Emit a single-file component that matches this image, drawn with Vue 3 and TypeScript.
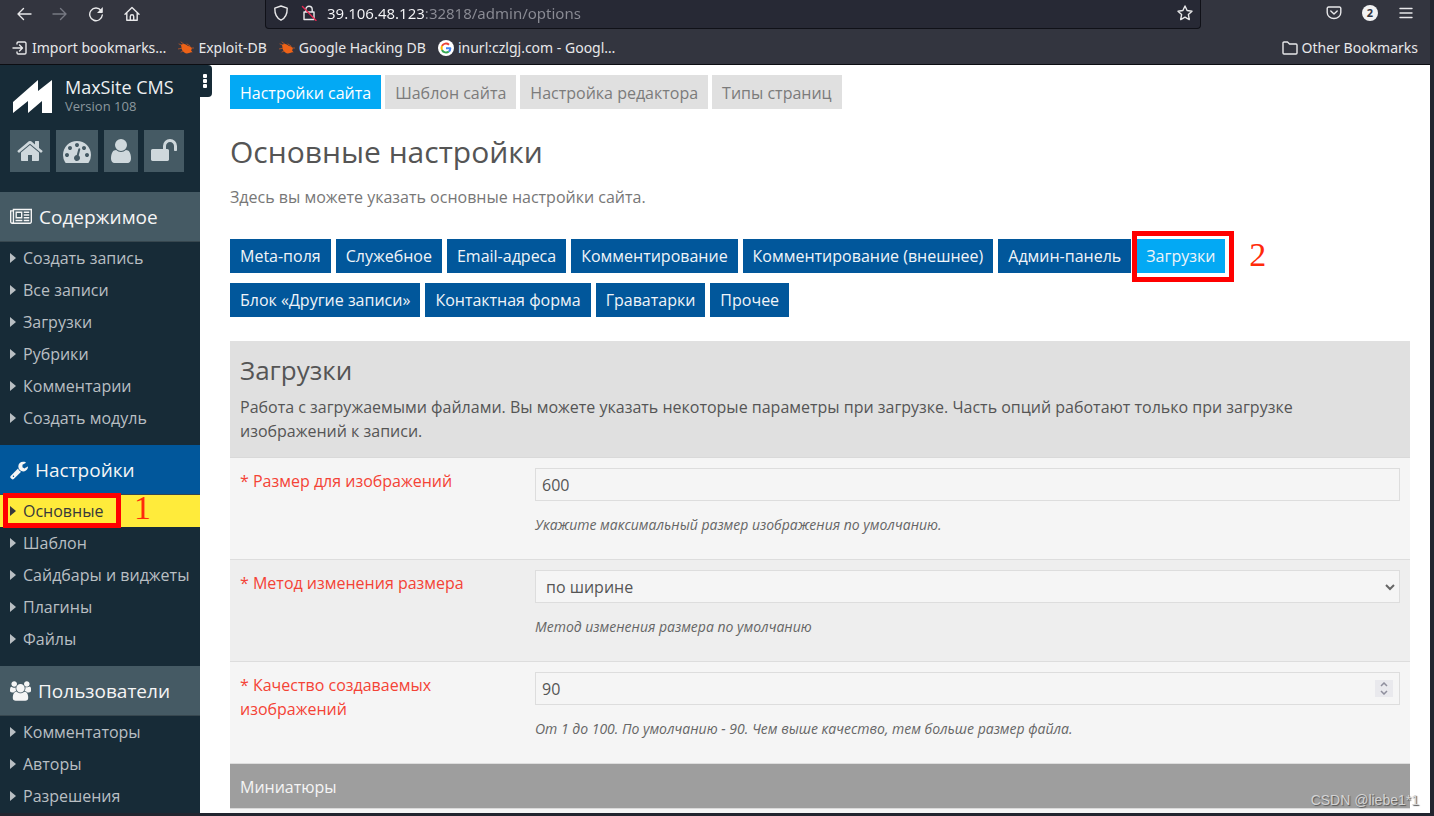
<script setup lang="ts">
import { ref } from 'vue'

interface Tool {
  label: string
  viewBox: string
  width: number
  path: string
}

interface MenuGroup {
  title: string
  current?: boolean
  viewBox: string
  width: number
  path: string
  items: string[]
}

const tools: Tool[] = [
  {
    label: 'Сайт',
    viewBox: '64 0 1664 1792',
    width: 26,
    path: 'M1472 992v480q0 26-19 45t-45 19h-384v-384h-256v384h-384q-26 0-45-19t-19-45v-480q0-1 .5-3t.5-3l575-474 575 474q1 2 1 6zm223-69l-62 74q-8 9-21 11h-3q-13 0-21-7l-692-577-692 577q-12 8-24 7-13-2-21-11l-62-74q-8-10-7-23.5t11-21.5l719-599q32-26 76-26t76 26l244 204v-195q0-14 9-23t23-9h192q14 0 23 9t9 23v408l219 182q10 8 11 21.5t-7 23.5z',
  },
  {
    label: 'Панель',
    viewBox: '0 0 1792 1792',
    width: 28,
    path: 'M384 1152q0-53-37.5-90.5t-90.5-37.5-90.5 37.5-37.5 90.5 37.5 90.5 90.5 37.5 90.5-37.5 37.5-90.5zm192-448q0-53-37.5-90.5t-90.5-37.5-90.5 37.5-37.5 90.5 37.5 90.5 90.5 37.5 90.5-37.5 37.5-90.5zm428 481l101-382q6-26-7.5-48.5t-38.5-29.5-48 6.5-30 39.5l-101 382q-60 5-107 43.5t-63 98.5q-20 77 20 146t117 89 146-20 89-117q16-60-6-117t-72-91zm660-33q0-53-37.5-90.5t-90.5-37.5-90.5 37.5-37.5 90.5 37.5 90.5 90.5 37.5 90.5-37.5 37.5-90.5zm-640-640q0-53-37.5-90.5t-90.5-37.5-90.5 37.5-37.5 90.5 37.5 90.5 90.5 37.5 90.5-37.5 37.5-90.5zm448 192q0-53-37.5-90.5t-90.5-37.5-90.5 37.5-37.5 90.5 37.5 90.5 90.5 37.5 90.5-37.5 37.5-90.5zm320 448q0 261-141 483-19 29-54 29h-1402q-35 0-54-29-141-221-141-483 0-182 71-348t191-286 286-191 348-71 348 71 286 191 191 286 71 348z',
  },
  {
    label: 'Профиль',
    viewBox: '256 0 1280 1792',
    width: 20,
    path: 'M1536 1399q0 109-62.5 187t-150.5 78h-854q-88 0-150.5-78t-62.5-187q0-85 8.5-160.5t31.5-152 58.5-131 94-89 134.5-34.5q131 128 313 128t313-128q76 0 134.5 34.5t94 89 58.5 131 31.5 152 8.5 160.5zm-256-887q0 159-112.5 271.5t-271.5 112.5-271.5-112.5-112.5-271.5 112.5-271.5 271.5-112.5 271.5 112.5 112.5 271.5z',
  },
  {
    label: 'Выход',
    viewBox: '64 0 1664 1792',
    width: 26,
    path: 'M1728 576v256q0 26-19 45t-45 19h-64q-26 0-45-19t-19-45v-256q0-106-75-181t-181-75-181 75-75 181v192h96q40 0 68 28t28 68v576q0 40-28 68t-68 28h-960q-40 0-68-28t-28-68v-576q0-40 28-68t68-28h672v-192q0-185 131.5-316.5t316.5-131.5 316.5 131.5 131.5 316.5z',
  },
]

const menu: MenuGroup[] = [
  {
    title: 'Содержимое',
    viewBox: '0 0 2048 1792',
    width: 22,
    path: 'M1024 512h-384v384h384v-384zm128 640v128h-640v-128h640zm0-768v640h-640v-640h640zm640 768v128h-512v-128h512zm0-256v128h-512v-128h512zm0-256v128h-512v-128h512zm0-256v128h-512v-128h512zm-1536 960v-960h-128v960q0 26 19 45t45 19 45-19 19-45zm1664 0v-1088h-1536v1088q0 33-11 64h1483q26 0 45-19t19-45zm128-1216v1216q0 80-56 136t-136 56h-1664q-80 0-136-56t-56-136v-1088h256v-128h1792z',
    items: ['Создать запись', 'Все записи', 'Загрузки', 'Рубрики', 'Комментарии', 'Создать модуль'],
  },
  {
    title: 'Настройки',
    current: true,
    viewBox: '64 0 1664 1792',
    width: 18,
    path: 'M448 1472q0-26-19-45t-45-19-45 19-19 45 19 45 45 19 45-19 19-45zm644-420l-682 682q-37 37-90 37-52 0-91-37l-106-108q-38-36-38-90 0-53 38-91l681-681q39 98 114.5 173.5t173.5 114.5zm634-435q0 39-23 106-47 134-164.5 217.5t-258.5 83.5q-185 0-316.5-131.5t-131.5-316.5 131.5-316.5 316.5-131.5q58 0 121.5 16.5t107.5 46.5q16 11 16 28t-16 28l-293 169v224l193 107q5-3 79-48.5t135.5-81 70.5-35.5q15 0 23.5 10t8.5 25z',
    items: ['Основные', 'Шаблон', 'Сайдбары и виджеты', 'Плагины', 'Файлы'],
  },
  {
    title: 'Пользователи',
    viewBox: '64 0 1920 1792',
    width: 21,
    path: 'M657 896q-162 5-265 128h-134q-82 0-138-40.5t-56-118.5q0-353 124-353 6 0 43.5 21t97.5 42.5 119 21.5q67 0 133-23-5 37-5 66 0 159 93 293zm1071 637q0 120-73 189.5t-194 69.5h-874q-121 0-194-69.5t-73-189.5q0-53 3.5-103.5t14-109 26.5-108.5 43-97.5 62-81 85.5-53.5 111.5-20q10 0 43 21.5t73 48 107 48 135 21.5 135-21.5 107-48 73-48 43-21.5q61 0 111.5 20t85.5 53.5 62 81 43 97.5 26.5 108.5 14 109 3.5 103.5zm-1024-1277q0 106-75 181t-181 75-181-75-75-181 75-181 181-75 181 75 75 181zm704 384q0 159-112.5 271.5t-271.5 112.5-271.5-112.5-112.5-271.5 112.5-271.5 271.5-112.5 271.5 112.5 112.5 271.5zm576 225q0 78-56 118.5t-138 40.5h-134q-103-123-265-128 93-134 93-293 0-29-5-66 66 23 133 23 59 0 119-21.5t97.5-42.5 43.5-21q124 0 124 353zm-128-609q0 106-75 181t-181 75-181-75-75-181 75-181 181-75 181 75 75 181z',
    items: ['Комментаторы', 'Авторы', 'Разрешения'],
  },
]

const tabs = ['Настройки сайта', 'Шаблон сайта', 'Настройка редактора', 'Типы страниц']

const sections = [
  'Meta-поля',
  'Служебное',
  'Email-адреса',
  'Комментирование',
  'Комментирование (внешнее)',
  'Админ-панель',
  'Загрузки',
  'Блок «Другие записи»',
  'Контактная форма',
  'Граватарки',
  'Прочее',
]

const activePage = ref('Основные')
const activeTab = ref('Настройки сайта')
const activeSection = ref('Загрузки')
const address = ref('39.106.48.123:32818/admin/options')
const imageSize = ref('600')
const resizeMethod = ref('по ширине')
const quality = ref(90)

function stepQuality(delta: number) {
  quality.value = Math.min(100, Math.max(1, quality.value + delta))
}
</script>

<template>
  <div class="window">
    <header class="chrome">
      <div class="toolbar">
        <div class="nav">
          <button type="button" aria-label="Back">
            <svg width="16" height="16" viewBox="0 0 16 16"><path d="M15 8H2M7.500 2.500 2 8l5.500 5.500" /></svg>
          </button>
          <button type="button" class="dim" aria-label="Forward">
            <svg width="16" height="16" viewBox="0 0 16 16"><path d="M1 8h13M8.500 2.500 14 8l-5.500 5.500" /></svg>
          </button>
          <button type="button" aria-label="Reload">
            <svg width="16" height="16" viewBox="0 0 16 16">
              <path d="M13 4.500A6.300 6.300 0 1 0 14.300 9" />
              <path class="solid" d="M14.800 1v5.200a.8.8 0 0 1-.8.8H9z" />
            </svg>
          </button>
          <button type="button" aria-label="Home">
            <svg width="16" height="16" viewBox="0 0 16 16">
              <path d="M1 8.200 8 1.500l7 6.700M2.800 7v7.200h10.400V7M6.300 14v-3.500a1.700 1.700 0 0 1 3.400 0V14" />
            </svg>
          </button>
        </div>
        <div class="address-bar">
          <svg width="16" height="16" viewBox="0 0 16 16">
            <path d="M8 1 14.200 3.200C14.300 9 12.500 13 8 15.200 3.500 13 1.700 9 1.800 3.200z" />
          </svg>
          <svg class="lock" width="16" height="16" viewBox="0 0 16 16">
            <path d="M3 7h10v7.500H3zM4.800 7V4.500a3.200 3.200 0 0 1 6.400 0V7" />
            <path class="slash" d="M1.500 1.500 15 15.500" />
          </svg>
          <input v-model="address" class="url" type="text" aria-label="Address" />
          <button type="button" aria-label="Bookmark this page">
            <svg width="16" height="16" viewBox="0 0 16 16">
              <path d="m8 1 2.100 4.500 4.900.7-3.600 3.400.9 5L8 12.200l-4.300 2.400.9-5L1 6.200l4.900-.7z" />
            </svg>
          </button>
        </div>
        <div class="extras">
          <button type="button" aria-label="Pocket">
            <svg width="16" height="16" viewBox="0 0 16 16">
              <path d="M2.500 2h11A1.300 1.300 0 0 1 14.800 3.300V7.500a6.800 6 0 0 1-13.600 0V3.300A1.300 1.300 0 0 1 2.500 2zM4.800 6 8 9l3.200-3" />
            </svg>
          </button>
          <button type="button" class="badge">2</button>
          <button type="button" aria-label="Menu">
            <svg width="16" height="16" viewBox="0 0 16 16"><path d="M2 3.500h12M2 8h12M2 12.500h12" /></svg>
          </button>
        </div>
      </div>
      <nav class="bookmarks">
        <a href="#">
          <svg width="16" height="16" viewBox="0 0 16 16">
            <path d="M5 4V3.300A1.300 1.300 0 0 1 6.300 2h6.400A1.300 1.300 0 0 1 14 3.300v9.400a1.300 1.300 0 0 1-1.300 1.300H6.300A1.300 1.300 0 0 1 5 12.700V12M1 8h9M7.500 5 10.500 8l-3 3" />
          </svg>
          Import bookmarks…
        </a>
        <a v-for="name in ['Exploit-DB', 'Google Hacking DB']" :key="name" href="#">
          <svg width="16" height="16" viewBox="0 0 16 16">
            <path class="bug-legs" d="M1 4l5 2M0 9l5-1M3 2l4 3M9 4l3 2M13 8h3M12 11l2 1M5 11l-2 1" />
            <path class="bug" d="M3 5c2-2 5-1 7 1 2 0 3 1 4 3l-1 1 1 2-3 1c-3 1-5 0-7-3z" />
          </svg>
          {{ name }}
        </a>
        <a href="#">
          <svg width="16" height="16" viewBox="0 0 48 48">
            <circle class="disc" cx="24" cy="24" r="24" />
            <path class="g-red" d="M12 18a13.500 13.500 0 0 1 21-4" />
            <path class="g-yellow" d="M12 18a13.500 13.500 0 0 0 0 12" />
            <path class="g-green" d="M12 30a13.500 13.500 0 0 0 20.500 4.500" />
            <path class="g-blue" d="M32.500 34.500A13 13 0 0 0 37 24.500H24" />
          </svg>
          inurl:czlgj.com - Googl…
        </a>
        <a href="#" class="other">
          <svg width="16" height="16" viewBox="0 0 16 16">
            <path d="M1 13V3a1 1 0 0 1 1-1h3.500L7.500 4H14a1 1 0 0 1 1 1v8a1 1 0 0 1-1 1H2a1 1 0 0 1-1-1z" />
          </svg>
          Other Bookmarks
        </a>
      </nav>
    </header>

    <div class="page">
      <aside class="sidebar">
        <button type="button" class="toggle" aria-label="Меню">
          <svg width="4" height="16" viewBox="0 0 4 16">
            <rect y="1" width="4" height="4" rx="1" />
            <rect y="6" width="4" height="4" rx="1" />
            <rect y="11" width="4" height="4" rx="1" />
          </svg>
        </button>
        <div class="brand">
          <svg width="40" height="34" viewBox="0 0 40 34">
            <path d="M0 22 25 0v11L39 0v33H29V21L15 33V21L0 33z" />
          </svg>
          <div>
            <div class="brand-name">MaxSite CMS</div>
            <div class="brand-version">Version 108</div>
          </div>
        </div>
        <div class="tools">
          <a v-for="tool in tools" :key="tool.label" href="#" :aria-label="tool.label">
            <svg :width="tool.width" height="28" :viewBox="tool.viewBox"><path :d="tool.path" /></svg>
          </a>
        </div>
        <section v-for="group in menu" :key="group.title" class="group">
          <h2 :class="{ current: group.current }">
            <svg :width="group.width" height="20" :viewBox="group.viewBox"><path :d="group.path" /></svg>
            {{ group.title }}
          </h2>
          <ul>
            <li v-for="item in group.items" :key="item">
              <a href="#" :class="{ active: item === activePage }" @click.prevent="activePage = item">
                <svg width="6" height="10" viewBox="0 0 6 10"><path d="M0 0v10l6-5z" /></svg>
                {{ item }}
              </a>
              <template v-if="item === 'Основные'">
                <span class="mark mark-page"></span>
                <span class="digit digit-page">1</span>
              </template>
            </li>
          </ul>
        </section>
      </aside>

      <main class="content">
        <nav class="tabs">
          <a
            v-for="tab in tabs"
            :key="tab"
            href="#"
            :class="{ active: tab === activeTab }"
            @click.prevent="activeTab = tab"
          >{{ tab }}</a>
        </nav>
        <h1>Основные настройки</h1>
        <p class="lead">Здесь вы можете указать основные настройки сайта.</p>
        <div class="sections">
          <div v-for="name in sections" :key="name" class="section">
            <button type="button" :class="{ active: name === activeSection }" @click="activeSection = name">
              {{ name }}
            </button>
            <template v-if="name === 'Загрузки'">
              <span class="mark mark-section"></span>
              <span class="digit digit-section">2</span>
            </template>
          </div>
        </div>

        <form class="options" @submit.prevent>
          <div class="intro">
            <h2>Загрузки</h2>
            <p>
              Работа с загружаемыми файлами. Вы можете указать некоторые параметры при загрузке. Часть опций
              работают только при загрузке изображений к записи.
            </p>
          </div>
          <div class="row">
            <label for="image-size">* Размер для изображений</label>
            <div class="field">
              <input id="image-size" v-model="imageSize" type="text" />
              <p>Укажите максимальный размер изображения по умолчанию.</p>
            </div>
          </div>
          <div class="row">
            <label for="resize-method">* Метод изменения размера</label>
            <div class="field">
              <div class="control">
                <select id="resize-method" v-model="resizeMethod">
                  <option>по ширине</option>
                </select>
                <svg class="chevron" width="10" height="8" viewBox="0 0 10 8"><path d="M1 2l4 4 4-4" /></svg>
              </div>
              <p>Метод изменения размера по умолчанию</p>
            </div>
          </div>
          <div class="row">
            <label for="quality">* Качество создаваемых изображений</label>
            <div class="field">
              <div class="control">
                <input id="quality" v-model.number="quality" type="number" min="1" max="100" />
                <div class="spinner">
                  <button type="button" aria-label="Больше" @click="stepQuality(1)">
                    <svg width="8" height="5" viewBox="0 0 8 5"><path d="M1 4l3-3 3 3" /></svg>
                  </button>
                  <button type="button" aria-label="Меньше" @click="stepQuality(-1)">
                    <svg width="8" height="5" viewBox="0 0 8 5"><path d="M1 1l3 3 3-3" /></svg>
                  </button>
                </div>
              </div>
              <p>От 1 до 100. По умолчанию - 90. Чем выше качество, тем больше размер файла.</p>
            </div>
          </div>
          <h3>Миниатюры</h3>
          <div class="row"></div>
        </form>
      </main>
    </div>
    <div class="watermark">CSDN @liebe1*1</div>
  </div>
</template>

<style>
body {
  margin: 0;
  background: #22252f;
}
</style>

<style scoped>
* {
  box-sizing: border-box;
}

.window {
  position: relative;
  display: flex;
  flex-direction: column;
  height: 100vh;
  padding: 0 4px 3px 0;
  overflow: hidden;
  background: #22252f;
  font-family: "Open Sans", "Noto Sans", sans-serif;
  font-size: 16px;
  line-height: 24px;
}

button {
  padding: 0;
  border: 0;
  background: none;
  color: inherit;
  font: inherit;
  cursor: pointer;
}

a {
  color: inherit;
  text-decoration: none;
}

h1,
h2,
h3,
p,
ul {
  margin: 0;
  padding: 0;
  font-weight: 400;
  list-style: none;
}

svg {
  flex: none;
}

/* Browser chrome */
.chrome {
  flex: none;
  border-bottom: 1px solid #0c0d12;
  background: #33353f;
  color: #e8e8ea;
  font-family: "Noto Sans", sans-serif;
  font-size: 14px;
}

.chrome svg {
  display: block;
  fill: none;
  stroke: currentColor;
  stroke-width: 1.4;
  stroke-linecap: round;
  stroke-linejoin: round;
}

.chrome svg .solid {
  fill: currentColor;
  stroke: none;
}

.toolbar {
  display: flex;
  height: 29px;
}

.nav {
  display: flex;
  align-items: center;
  gap: 20px;
  width: 265px;
  padding: 0 0 2px 16px;
}

.dim {
  color: #777983;
}

.address-bar {
  display: flex;
  flex: 1;
  align-items: center;
  gap: 12px;
  padding: 0 7px 2px;
  border: 1px solid #101118;
  border-top: 0;
  border-radius: 0 0 4px 4px;
  background: #272935;
}

.chrome .lock .slash {
  stroke: #e22850;
}

.url {
  flex: 1;
  min-width: 0;
  height: 24px;
  margin-left: -2px;
  padding: 0;
  border: 0;
  outline: 0;
  background: linear-gradient(90deg, #f8f8fa 97px, #8b8c95 97px);
  background-clip: text;
  -webkit-background-clip: text;
  color: transparent;
  caret-color: #f8f8fa;
  font: inherit;
  font-size: 15px;
}

.extras {
  display: flex;
  align-items: center;
  justify-content: flex-end;
  gap: 20px;
  width: 229px;
  padding: 0 16px 3px 0;
}

.badge {
  width: 16px;
  height: 16px;
  border-radius: 8px;
  background: #f2f2f3;
  color: #33353f;
  font-size: 11px;
  font-weight: 700;
  line-height: 16px;
}

.bookmarks {
  display: flex;
  align-items: center;
  gap: 12px;
  height: 35px;
  padding: 2px 12px 0;
}

.bookmarks a {
  display: flex;
  align-items: center;
  gap: 4px;
  white-space: nowrap;
}

.bookmarks .other {
  margin-left: auto;
}

.chrome .bug {
  fill: #ee6217;
  stroke: none;
}

.chrome .bug-legs {
  stroke: #a3502a;
  stroke-width: 1;
}

.chrome .disc {
  fill: #ffffff;
  stroke: none;
}

.g-red,
.g-yellow,
.g-green,
.g-blue {
  stroke-width: 6;
  stroke-linecap: butt;
}

.g-red {
  stroke: #ea4335;
}

.g-yellow {
  stroke: #fbbc05;
}

.g-green {
  stroke: #34a853;
}

.g-blue {
  stroke: #4285f4;
}

/* Admin page */
.page {
  display: flex;
  flex: 1;
  min-height: 0;
  background: #ffffff;
}

.sidebar {
  position: relative;
  flex: none;
  width: 200px;
  background: #172b37;
  color: #b9bfc3;
}

.sidebar svg {
  fill: currentColor;
}

.toggle {
  position: absolute;
  top: 0;
  right: -12px;
  display: flex;
  justify-content: center;
  width: 16px;
  height: 32px;
  padding: 8px 0 0 2px;
  border-radius: 0 4px 4px 0;
  background: #172b37;
  color: #ffffff;
}

.brand {
  display: flex;
  gap: 12px;
  padding: 11px 13px 0;
}

.brand svg {
  margin-top: 4px;
  color: #ffffff;
}

.brand-name {
  color: #eceff1;
  font-size: 18px;
  line-height: 22px;
}

.brand-version {
  color: #8c989e;
  font-size: 13px;
  line-height: 16px;
}

.tools {
  display: flex;
  gap: 6px;
  padding: 16px 10px 20px;
}

.tools a {
  padding: 7px;
  background: #455a64;
  color: #cfd8dc;
}

.tools svg {
  display: block;
}

.group {
  padding-bottom: 11px;
}

.group h2 {
  display: flex;
  align-items: center;
  gap: 7px;
  height: 50px;
  padding: 0 10px;
  border-bottom: 1px solid #37474f;
  background: #455a64;
  color: #f5f5f5;
  font-size: 19px;
  line-height: 28px;
}

.group h2.current {
  background: #01579b;
}

.group li {
  position: relative;
}

.group a {
  display: flex;
  align-items: center;
  gap: 7px;
  height: 32px;
  padding: 0 10px;
  white-space: nowrap;
}

.group a.active {
  background: #ffeb3b;
  color: #37393b;
}

.content {
  flex: 1;
  min-width: 0;
  padding: 10px 20px 0 30px;
  overflow: hidden;
  color: #555555;
}

.tabs {
  display: flex;
  gap: 4px;
}

.tabs a {
  padding: 6px 10px 4px;
  background: #e0e0e0;
  color: #7b7b7b;
}

.tabs a.active {
  background: #03a9f4;
  color: #ffffff;
}

h1 {
  margin-top: 23px;
  font-size: 30px;
  line-height: 40px;
}

.lead {
  margin-top: 13px;
  color: #777777;
}

.sections {
  display: flex;
  flex-wrap: wrap;
  gap: 10px 5px;
  margin-top: 30px;
}

.section {
  position: relative;
}

.section button {
  display: block;
  padding: 5px 10px;
  background: #01579b;
  color: #f0f4f8;
}

.section button.active {
  background: #03a9f4;
}

.options {
  margin-top: 24px;
}

.intro {
  padding: 11px 10px 14px;
  border-bottom: 1px solid #d9d9d9;
  background: #e0e0e0;
}

.intro h2 {
  font-size: 26px;
  line-height: 36px;
}

.intro p {
  margin-top: 7px;
}

.row {
  display: grid;
  grid-template-columns: 295px 1fr;
  min-height: 102px;
  padding: 10px;
  border-bottom: 1px solid #dddddd;
  background: #f5f5f5;
}

.row:nth-child(odd) {
  background: #eeeeee;
}

.row label {
  padding: 1px 40px 0 0;
  color: #f44336;
}

.control {
  position: relative;
}

.field input,
.field select {
  display: block;
  width: 100%;
  height: 33px;
  margin: 0;
  padding: 0 6px;
  border: 1px solid #dddddd;
  border-radius: 0;
  outline: 0;
  background: #f5f5f5;
  color: #555555;
  font: inherit;
  appearance: none;
}

.field select {
  padding: 0 10px;
}

.field input[type="number"] {
  appearance: textfield;
}

.field input::-webkit-inner-spin-button {
  appearance: none;
}

.field p {
  margin-top: 12px;
  color: #666666;
  font-size: 14px;
  font-style: italic;
}

.chevron {
  position: absolute;
  top: 13px;
  right: 5px;
  fill: none;
  stroke: #666666;
  stroke-width: 2;
  pointer-events: none;
}

.spinner {
  position: absolute;
  top: 8px;
  right: 7px;
  display: flex;
  flex-direction: column;
  width: 18px;
  height: 17px;
  background: #e9e9ed;
}

.spinner button {
  display: flex;
  flex: 1;
  align-items: center;
  justify-content: center;
}

.spinner svg {
  fill: none;
  stroke: #8f8f9d;
  stroke-width: 1.5;
}

h3 {
  height: 45px;
  padding: 0 10px;
  border-bottom: 1px solid #d9d9d9;
  background: #9e9e9e;
  color: #f5f5f5;
  font-size: 16px;
  line-height: 46px;
}

/* Annotations */
.mark {
  position: absolute;
  z-index: 1;
  border: 5px solid #ff0000;
  pointer-events: none;
}

.mark-page {
  top: -2px;
  right: 79px;
  bottom: -1px;
  left: 3px;
}

.mark-section {
  top: -8px;
  right: -9px;
  bottom: -9px;
  left: -4px;
}

.digit {
  position: absolute;
  color: #ff2a0a;
  font-family: "Liberation Serif", serif;
  font-size: 34px;
  line-height: 34px;
}

.digit-page {
  top: -4px;
  left: 134px;
}

.digit-section {
  top: -1px;
  left: 113px;
}

.watermark {
  position: absolute;
  right: 15px;
  bottom: 4px;
  color: #d4d4d4;
  font-family: "Liberation Sans", Arial, sans-serif;
  font-size: 14px;
  text-shadow: 1px 1px 1px #555555;
}
</style>
